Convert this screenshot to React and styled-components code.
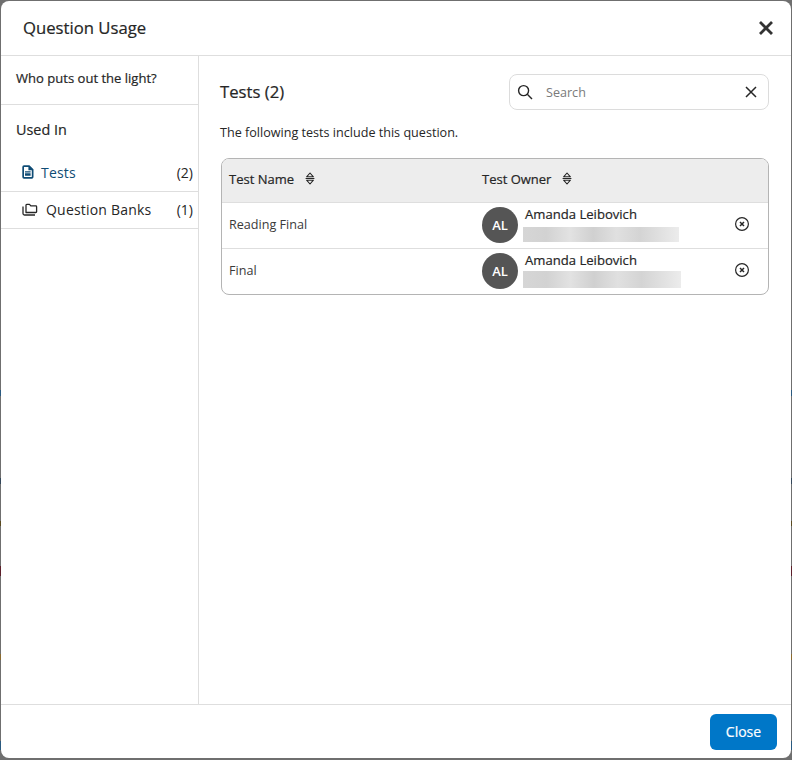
import React from "react";
import styled, { createGlobalStyle, css } from "styled-components";

const Global = createGlobalStyle`
  html, body { margin: 0; padding: 0; background: #fff; }
  * { box-sizing: border-box; }
  body { font-family: "Open Sans", "Liberation Sans", sans-serif; color: #262626; }
`;

const medium = css`
  font-weight: 500;
  -webkit-text-stroke: 0.2px currentColor;
`;

const Backdrop = styled.div`
  width: 792px;
  height: 760px;
  padding: 1px 1px 2px 1px;
  background:
    linear-gradient(to bottom,
      #6f6f6f 0 390px, #2a5a80 390px 396px, #6f6f6f 396px 478px, #33475a 478px 484px,
      #6f6f6f 484px 521px, #5a4a20 521px 526px, #6f6f6f 526px 566px, #5c1f2a 566px 576px,
      #6f6f6f 576px 654px, #8a6a30 654px 660px, #6f6f6f 660px 741px, #2a5a80 741px 750px,
      #6f6f6f 750px);
`;

const Dialog = styled.div`
  height: 100%;
  display: flex;
  flex-direction: column;
  background: #fff;
  border-radius: 8px;
  overflow: hidden;
`;

const Header = styled.header`
  flex: 0 0 55px;
  display: flex;
  align-items: center;
  justify-content: space-between;
  padding: 0 16px 0 22px;
  border-bottom: 1px solid #dedede;
`;

const Title = styled.h1`
  margin: 0;
  font-size: 16.7px;
  ${medium}
  line-height: 22px;
  color: #262626;
`;

const IconButton = styled.button`
  display: flex;
  align-items: center;
  justify-content: center;
  padding: 0;
  border: 0;
  background: none;
  color: #262626;
  cursor: pointer;
`;

const Body = styled.div`
  flex: 1;
  display: flex;
  min-height: 0;
`;

const Side = styled.aside`
  flex: 0 0 198px;
  border-right: 1px solid #dedede;
  display: flex;
  flex-direction: column;
`;

const QuestionLabel = styled.div`
  height: 49px;
  padding: 13px 0 0 15px;
  font-size: 13.05px;
  ${medium}
  line-height: 18px;
  color: #262626;
  border-bottom: 1px solid #dedede;
`;

const SideHeading = styled.div`
  height: 50px;
  padding: 15px 0 0 15px;
  font-size: 14.4px;
  ${medium}
  line-height: 20px;
  color: #262626;
`;

const NavRow = styled.div`
  height: 37px;
  display: flex;
  align-items: center;
  gap: ${(p) => p.$gap}px;
  padding: 0 5px 2px 21px;
  font-size: 14px;
  letter-spacing: 0.2px;
  color: ${(p) => (p.$active ? "#0f4c75" : "#262626")};
  border-bottom: 1px solid #dedede;
`;

const NavLabel = styled.span`
  flex: 1;
`;

const NavCount = styled.span`
  color: #262626;
  letter-spacing: 0;
`;

const Main = styled.main`
  flex: 1;
  padding: 18px 22px 0 22px;
`;

const TopRow = styled.div`
  display: flex;
  align-items: center;
  justify-content: space-between;
  height: 36px;
`;

const SectionTitle = styled.h2`
  margin: 0 0 2px -1px;
  font-size: 16.7px;
  ${medium}
  color: #262626;
`;

const SearchBox = styled.div`
  width: 260px;
  height: 36px;
  display: flex;
  align-items: center;
  padding: 0 11px 0 7px;
  border: 1px solid #dcdcdc;
  border-radius: 8px;
  background: #fff;
`;

const SearchInput = styled.input`
  flex: 1;
  min-width: 0;
  margin-left: 13px;
  border: 0;
  outline: 0;
  padding: 0;
  font: 400 12.6px "Open Sans", sans-serif;
  background: none;
  &::placeholder { color: #7a7a7a; opacity: 1; }
`;

const Intro = styled.p`
  margin: 14px 0 16px -1px;
  font-size: 12.6px;
  line-height: 18px;
  color: #262626;
`;

const Table = styled.div`
  border: 1px solid #b4b4b4;
  border-radius: 8px;
  overflow: hidden;
`;

const HeadRow = styled.div`
  display: grid;
  grid-template-columns: 253px 1fr;
  align-items: center;
  height: 44px;
  padding: 0 0 4px 7px;
  background: #ededed;
  border-bottom: 1px solid #dedede;
`;

const HeadCell = styled.div`
  display: flex;
  align-items: center;
  gap: 11px;
  font-size: 13px;
  ${medium}
  color: #262626;
`;

const Row = styled.div`
  display: grid;
  grid-template-columns: 253px 1fr 52px;
  align-items: center;
  height: ${(p) => p.$h}px;
  padding-left: 7px;
  font-size: 12.6px;
  color: #3a3a3a;
  border-bottom: ${(p) => (p.$last ? "0" : "1px solid #dedede")};
`;

const NameCell = styled.div`
  padding-bottom: 2px;
`;

const Owner = styled.div`
  display: flex;
  align-items: flex-start;
  padding-bottom: 1px;
`;

const Avatar = styled.div`
  flex: 0 0 36px;
  width: 36px;
  height: 36px;
  border-radius: 50%;
  background: #555;
  color: #fff;
  font-size: 13px;
  font-weight: 600;
  display: flex;
  align-items: center;
  justify-content: center;
`;

const OwnerText = styled.div`
  margin-left: 5px;
  display: flex;
  flex-direction: column;
`;

const OwnerName = styled.div`
  margin: -2px 0 0 2px;
  font-size: 13.1px;
  ${medium}
  line-height: 18px;
  color: #262626;
`;

const Redacted = styled.div`
  width: ${(p) => p.$w}px;
  height: ${(p) => p.$h}px;
  margin-top: ${(p) => p.$t}px;
  background: linear-gradient(90deg, #d6d6d6 0%, #d2d2d2 15%, #e2e2e2 30%, #d0d0d0 45%, #e0e0e0 60%, #d4d4d4 75%, #e2e2e2 90%, #ececec 100%);
`;

const Footer = styled.footer`
  flex: 0 0 54px;
  display: flex;
  align-items: center;
  justify-content: flex-end;
  padding: 0 14px 0 0;
  border-top: 1px solid #dedede;
`;

const CloseButton = styled.button`
  width: 67px;
  height: 36px;
  border: 0;
  border-radius: 6px;
  background: #0077c8;
  color: #fff;
  font: 500 14px "Open Sans", sans-serif;
  -webkit-text-stroke: 0.2px currentColor;
  cursor: pointer;
`;

const RemoveButton = styled(IconButton)`
  padding-bottom: 4px;
`;

const SortIcon = () => (
  <svg width="10" height="13" viewBox="0 0 10 13" fill="none" stroke="#262626" strokeWidth="1.1" strokeLinejoin="round">
    <path d="M5 1 8.4 4.8H1.6Z" />
    <path d="M.6 6.5H9.4" />
    <path d="M5 12 8.4 8.2H1.6Z" />
  </svg>
);

const RemoveIcon = () => (
  <svg width="16" height="16" viewBox="0 0 16 16" fill="none" stroke="#262626">
    <circle cx="8" cy="8" r="6.4" strokeWidth="1.2" />
    <path d="M6 6 10 10M10 6 6 10" strokeWidth="1.5" />
  </svg>
);

const rows = [
  { name: "Reading Final", h: 46, w: 156, bh: 15, t: 4 },
  { name: "Final", h: 45, w: 158, bh: 17, t: 2, last: true },
];

export default function App() {
  return (
    <>
      <Global />
      <Backdrop>
        <Dialog>
          <Header>
            <Title>Question Usage</Title>
            <IconButton aria-label="Close dialog">
              <svg width="18" height="18" viewBox="0 0 18 18" fill="none" stroke="#333" strokeWidth="2.8">
                <path d="M3 3 15 15M15 3 3 15" />
              </svg>
            </IconButton>
          </Header>
          <Body>
            <Side>
              <QuestionLabel>Who puts out the light?</QuestionLabel>
              <SideHeading>Used In</SideHeading>
              <NavRow $active $gap={7}>
                <svg width="12" height="14" viewBox="0 0 12 14">
                  <path fill="#0f4c75" fillRule="evenodd" d="M2 .3h5.4L11.5 4.3V12a1.7 1.7 0 0 1-1.7 1.7H2A1.7 1.7 0 0 1 .3 12V2A1.7 1.7 0 0 1 2 .3ZM6.4 2H2v10h7.8V5.3H6.4ZM3 6.2h5.6v1.2H3Zm0 2.1h5.6v2.4H3Z" />
                </svg>
                <NavLabel>Tests</NavLabel>
                <NavCount>(2)</NavCount>
              </NavRow>
              <NavRow $gap={8}>
                <svg width="16" height="13" viewBox="0 0 16 13" fill="none" stroke="#262626" strokeWidth="1.3" strokeLinejoin="round">
                  <path d="M4 9.5V2.2c0-.5.3-.8.8-.8h2.7l1.3 1.5h5c.5 0 .8.3.8.8v5c0 .5-.3.8-.8.8H4.8c-.5 0-.8-.3-.8-.8Z" />
                  <path d="M1 3.5v7c0 .9.6 1.5 1.5 1.5H13" />
                </svg>
                <NavLabel>Question Banks</NavLabel>
                <NavCount>(1)</NavCount>
              </NavRow>
            </Side>
            <Main>
              <TopRow>
                <SectionTitle>Tests (2)</SectionTitle>
                <SearchBox>
                  <svg width="16" height="16" viewBox="0 0 16 16" fill="none" stroke="#262626" strokeWidth="1.4">
                    <circle cx="6.6" cy="6.6" r="5" />
                    <path d="M10.3 10.3 15 15" />
                  </svg>
                  <SearchInput placeholder="Search" />
                  <IconButton aria-label="Clear search">
                    <svg width="12" height="12" viewBox="0 0 12 12" fill="none" stroke="#262626" strokeWidth="1.5">
                      <path d="M1 1 11 11M11 1 1 11" />
                    </svg>
                  </IconButton>
                </SearchBox>
              </TopRow>
              <Intro>The following tests include this question.</Intro>
              <Table>
                <HeadRow>
                  <HeadCell>Test Name <SortIcon /></HeadCell>
                  <HeadCell>Test Owner <SortIcon /></HeadCell>
                </HeadRow>
                {rows.map((r) => (
                  <Row key={r.name} $h={r.h} $last={r.last}>
                    <NameCell>{r.name}</NameCell>
                    <Owner>
                      <Avatar>AL</Avatar>
                      <OwnerText>
                        <OwnerName>Amanda Leibovich</OwnerName>
                        <Redacted $w={r.w} $h={r.bh} $t={r.t} />
                      </OwnerText>
                    </Owner>
                    <RemoveButton aria-label="Remove"><RemoveIcon /></RemoveButton>
                  </Row>
                ))}
              </Table>
            </Main>
          </Body>
          <Footer>
            <CloseButton>Close</CloseButton>
          </Footer>
        </Dialog>
      </Backdrop>
    </>
  );
}
